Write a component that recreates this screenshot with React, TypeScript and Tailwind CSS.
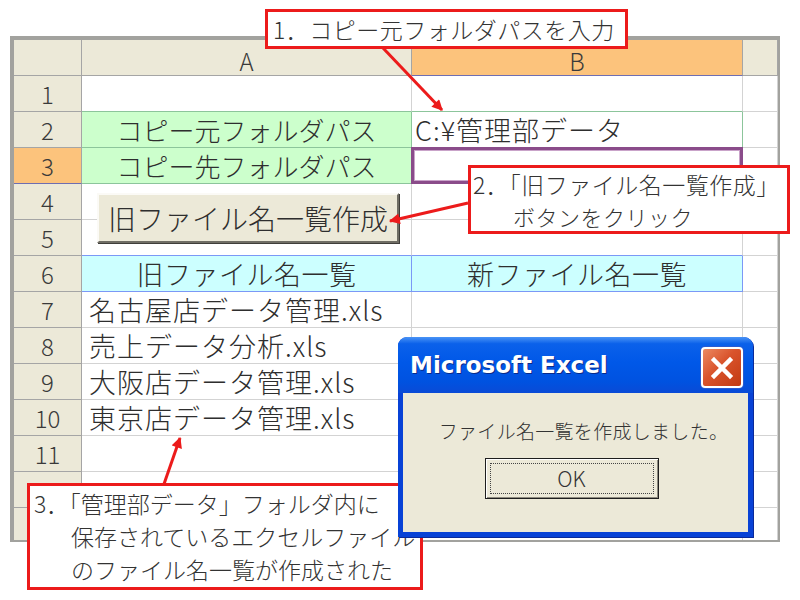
import React from "react";

const H =
  "h-[36px] flex items-center justify-center bg-[#ece9d8] border-r border-b border-[#a5a5a5] text-[24px] leading-none text-[#3a3a3a]";
const HS =
  "h-[36px] flex items-center justify-center bg-[#fcc37c] border-r border-b border-r-[#a5a5a5] border-b-[#6e6eb2] text-[24px] leading-none text-[#3a3a3a]";
const D =
  "h-[36px] flex items-center whitespace-nowrap border-r border-b text-[26px] leading-none text-[#2e2e2e]";
const G = " border-[#d3d3d3] bg-white";

function Num({ n, sel }: { n: string; sel?: boolean }) {
  return <div className={sel ? HS + " border-r-[#6e6eb2]" : H}>{n}</div>;
}

export default function App() {
  const files = [
    "名古屋店データ管理.xls",
    "売上データ分析.xls",
    "大阪店データ管理.xls",
    "東京店データ管理.xls",
  ];
  return (
    <div className="relative w-[800px] h-[600px] bg-white overflow-hidden pt-[36px] pl-[10px] font-['Noto_Sans_CJK_JP',sans-serif] font-light">
      {/* Spreadsheet */}
      <div className="w-[770px] h-[506px] border-l-4 border-t-4 border-r-2 border-b-2 border-[#a2a29e] overflow-hidden">
        <div className="grid grid-cols-[68px_330px_331px_35px]">
          {/* header */}
          <div className={H}></div>
          <div className={H + " pt-[7px]"}>A</div>
          <div className={HS + " pt-[7px]"}>B</div>
          <div className={H}></div>

          {/* row 1 */}
          <Num n="1" />
          <div className={D + " bg-white border-[#d3d3d3] border-b-[#8cc59b]"}></div>
          <div className={D + " bg-white border-[#d3d3d3] border-b-[#8cc59b]"}></div>
          <div className={D + G}></div>

          {/* row 2 */}
          <Num n="2" />
          <div className={D + " justify-center bg-[#ccffcc] border-[#8cc59b]"}>
            コピー元フォルダパス
          </div>
          <div className={D + " pl-[3px] bg-white border-[#8cc59b] text-[27px] tracking-[1px]"}>
            C:¥管理部データ
          </div>
          <div className={D + G}></div>

          {/* row 3 */}
          <Num n="3" sel />
          <div className={D + " justify-center bg-[#ccffcc] border-[#8cc59b]"}>
            コピー先フォルダパス
          </div>
          <div className={D + G + " relative"}>
            <div className="absolute -left-[1px] -top-[1px] -right-[1px] -bottom-[1px] border-[3px] border-[#8a4c8a] shadow-[inset_0_0_0_1px_#c9a3c9]"></div>
          </div>
          <div className={D + G}></div>

          {/* row 4 */}
          <Num n="4" />
          <div className={D + G}></div>
          <div className={D + G}></div>
          <div className={D + G}></div>

          {/* row 5 */}
          <Num n="5" />
          <div className={D + " bg-white border-[#d3d3d3] border-b-[#7b98f6]"}></div>
          <div className={D + " bg-white border-[#d3d3d3] border-b-[#7b98f6]"}></div>
          <div className={D + G}></div>

          {/* row 6 */}
          <Num n="6" />
          <div className={D + " justify-center bg-[#ccffff] border-[#7b98f6] text-[27px] tracking-[0.5px]"}>
            旧ファイル名一覧
          </div>
          <div className={D + " justify-center bg-[#ccffff] border-[#7b98f6] text-[27px] tracking-[0.5px]"}>
            新ファイル名一覧
          </div>
          <div className={D + G}></div>

          {/* rows 7-10 */}
          {files.map((f, i) => (
            <React.Fragment key={f}>
              <Num n={String(7 + i)} />
              <div className={D + G + " pl-[7px] text-[27px] tracking-[1px]"}>{f}</div>
              <div className={D + G}></div>
              <div className={D + G}></div>
            </React.Fragment>
          ))}

          {/* rows 11-13 */}
          {["11", "", " "].map((n) => (
            <React.Fragment key={"r" + n}>
              <Num n={n.trim()} />
              <div className={D + G}></div>
              <div className={D + G}></div>
              <div className={D + G}></div>
            </React.Fragment>
          ))}
        </div>
      </div>

      {/* Form button over rows 4-5 */}
      <div className="absolute left-[97px] top-[193px] w-[302px] h-[50px] flex items-center justify-center bg-[#ece9d8] border-2 border-t-[#fbfaf6] border-l-[#fbfaf6] border-r-[#6f6d64] border-b-[#6f6d64] shadow-[1px_1px_0_#3f3e3a] text-[28px] leading-none text-[#2e2e2e] whitespace-nowrap">
        旧ファイル名一覧作成
      </div>

      {/* Arrows */}
      <svg className="absolute left-0 top-0 pointer-events-none" width="800" height="600">
        <defs>
          <marker
            id="ah"
            viewBox="0 0 10 10"
            refX="9"
            refY="5"
            markerWidth="4.2"
            markerHeight="3.6"
            orient="auto"
            markerUnits="strokeWidth"
          >
            <path d="M0,0 L10,5 L0,10 z" fill="#ec1b1b" />
          </marker>
        </defs>
        <line x1="383" y1="48" x2="442" y2="110" stroke="#ec1b1b" strokeWidth="3" markerEnd="url(#ah)" />
        <line x1="468" y1="203" x2="390" y2="221" stroke="#ec1b1b" strokeWidth="3" markerEnd="url(#ah)" />
        <line x1="164" y1="484" x2="180" y2="438" stroke="#ec1b1b" strokeWidth="3" markerEnd="url(#ah)" />
      </svg>

      {/* Callout 1 */}
      <div className="absolute left-[265px] top-[9px] w-[363px] h-[40px] bg-white border-[3px] border-[#ec1b1b] flex items-center pl-[5px] text-[23px] tracking-[0.5px] leading-none text-[#333] whitespace-nowrap">
        1．コピー元フォルダパスを入力
      </div>

      {/* Callout 2 */}
      <div className="absolute left-[468px] top-[165px] w-[322px] h-[69px] bg-white border-[3px] border-[#ec1b1b] flex flex-col justify-center pl-[2px] text-[23px] tracking-[0.5px] leading-[32px] text-[#333] whitespace-nowrap">
        <div>2．「旧ファイル名一覧作成」</div>
        <div className="pl-[40px] text-[22px]">ボタンをクリック</div>
      </div>

      {/* Callout 3 */}
      <div className="absolute left-[27px] top-[483px] w-[396px] h-[107px] bg-white border-[3px] border-[#ec1b1b] flex flex-col justify-center pl-[4px] text-[23px] leading-[33px] text-[#333] whitespace-nowrap">
        <div>3．「管理部データ」フォルダ内に</div>
        <div className="pl-[37px]">保存されているエクセルファイル</div>
        <div className="pl-[37px]">のファイル名一覧が作成された</div>
      </div>

      {/* Dialog */}
      <div className="absolute left-[398px] top-[337px] w-[355px] h-[200px] rounded-t-[9px] bg-[#0842d6] flex flex-col px-[5px] pb-[5px] shadow-[1px_1px_0_#0a2a9a]">
        <div className="relative -mx-[5px] h-[56px] rounded-t-[9px] bg-[linear-gradient(to_bottom,#4a94f6_0%,#0b61ea_12%,#0058e8_45%,#0052e0_80%,#0a4ad6_100%)] flex items-center pl-[12px]">
          <span className="font-['DejaVu_Sans',sans-serif] font-bold text-[23px] text-white [text-shadow:1px_1px_0_#0a2a88]">
            Microsoft Excel
          </span>
          <div className="absolute left-[303px] top-[10px] w-[42px] h-[41px] rounded-[4px] border-2 border-white bg-[linear-gradient(135deg,#ec8a62_0%,#d9532b_45%,#c23a12_100%)] flex items-center justify-center shadow-[0_0_0_1px_#2b5bd0]">
            <svg width="24" height="24" viewBox="0 0 24 24">
              <path d="M4 4 L20 20 M20 4 L4 20" stroke="white" strokeWidth="4.5" strokeLinecap="square" />
            </svg>
          </div>
        </div>
        <div className="flex-1 bg-[#ece9d8] flex flex-col items-center">
          <div className="mt-[26px] ml-[16px] text-[19px] tracking-[0.3px] leading-[24px] text-[#333] whitespace-nowrap">
            ファイル名一覧を作成しました。
          </div>
          <div className="mt-[15px] -ml-[8px] w-[174px] h-[41px] border border-[#1e1e1e] bg-[#ece9d8] shadow-[inset_1px_1px_0_#ffffff,inset_-1px_-1px_0_#8d8a7e] flex items-center justify-center p-[4px]">
            <div className="w-full h-full border border-dotted border-[#444] flex items-center justify-center text-[21px] leading-none text-[#333]">
              OK
            </div>
          </div>
        </div>
      </div>
    </div>
  );
}
